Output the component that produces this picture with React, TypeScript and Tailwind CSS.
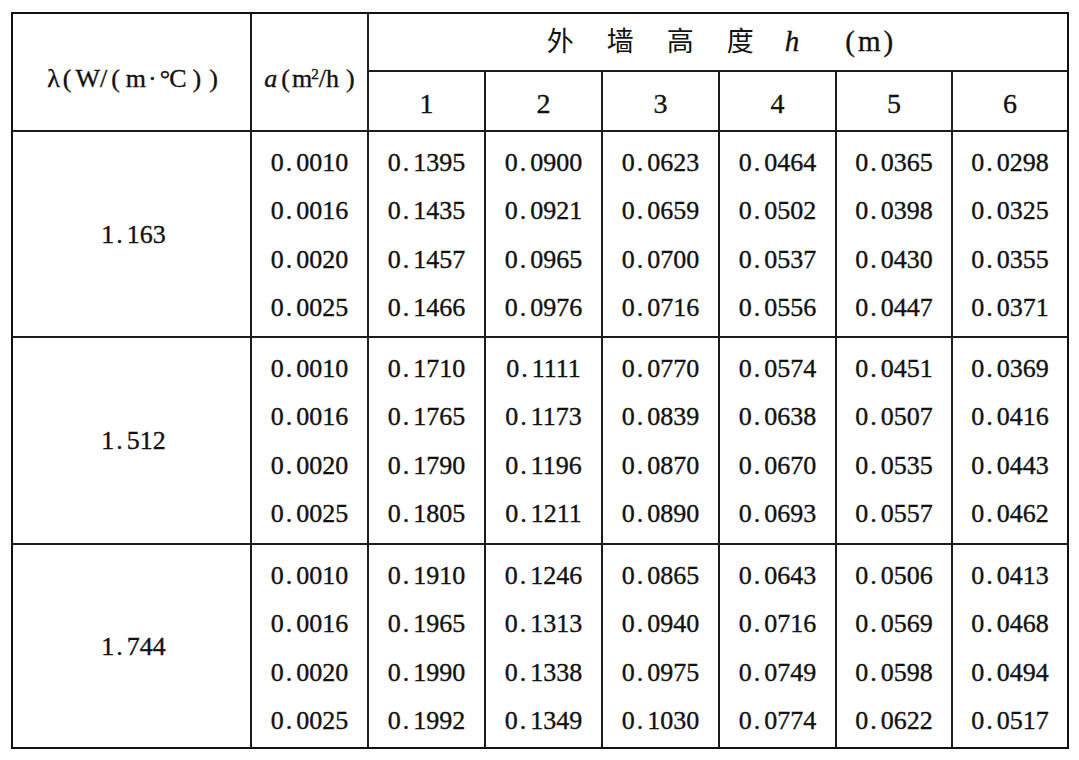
import React from 'react'

const groups = [
  {
    lambda: '1.163',
    rows: [
      ['0.0010', '0.1395', '0.0900', '0.0623', '0.0464', '0.0365', '0.0298'],
      ['0.0016', '0.1435', '0.0921', '0.0659', '0.0502', '0.0398', '0.0325'],
      ['0.0020', '0.1457', '0.0965', '0.0700', '0.0537', '0.0430', '0.0355'],
      ['0.0025', '0.1466', '0.0976', '0.0716', '0.0556', '0.0447', '0.0371'],
    ],
  },
  {
    lambda: '1.512',
    rows: [
      ['0.0010', '0.1710', '0.1111', '0.0770', '0.0574', '0.0451', '0.0369'],
      ['0.0016', '0.1765', '0.1173', '0.0839', '0.0638', '0.0507', '0.0416'],
      ['0.0020', '0.1790', '0.1196', '0.0870', '0.0670', '0.0535', '0.0443'],
      ['0.0025', '0.1805', '0.1211', '0.0890', '0.0693', '0.0557', '0.0462'],
    ],
  },
  {
    lambda: '1.744',
    rows: [
      ['0.0010', '0.1910', '0.1246', '0.0865', '0.0643', '0.0506', '0.0413'],
      ['0.0016', '0.1965', '0.1313', '0.0940', '0.0716', '0.0569', '0.0468'],
      ['0.0020', '0.1990', '0.1338', '0.0975', '0.0749', '0.0598', '0.0494'],
      ['0.0025', '0.1992', '0.1349', '0.1030', '0.0774', '0.0622', '0.0517'],
    ],
  },
]

// numbers are typeset with a loose decimal point, like the printed table
const Num: React.FC<{ v: string }> = ({ v }) => {
  const [i, f] = v.split('.')
  return (
    <span className="inline-flex">
      <span>{i}</span>
      <span className="ml-[2px] mr-[4px]">.</span>
      <span>{f}</span>
    </span>
  )
}

const Cjk: React.FC<{ ch: string; first?: boolean }> = ({ ch, first }) => (
  <span className={`font-['Noto_Sans_CJK_SC',sans-serif] text-[27px] leading-none [-webkit-text-stroke:0px] ${first ? '' : 'ml-[33px]'}`}>{ch}</span>
)

export default function App() {
  return (
    <div className="min-h-screen bg-white font-['Liberation_Serif',serif] text-[26px] text-[#111] [-webkit-text-stroke:0.35px_#111]">
      <div className="ml-[11px] pt-[12px]">
        <div className="grid w-fit grid-cols-[237px_115px_115px_115px_115px_115px_114px_114px] grid-rows-[56px_58px_204px_205px_202px] gap-[2px] border-2 border-[#111] bg-[#1c1c1c]">
          {/* header */}
          <div className="row-span-2 flex items-center justify-center bg-white pl-[2px] pt-[12px]">
            <span className="flex items-baseline">
              <span>λ</span>
              <span className="ml-[3px] mr-[4px]">(</span>
              <span>W/</span>
              <span className="ml-[4px] mr-[6px]">(</span>
              <span>m</span>
              <span className="ml-[2px] mr-[3px]">·</span>
              <span>°</span>
              <span className="-ml-[1px]">C</span>
              <span className="ml-[6px]">)</span>
              <span className="ml-[8px]">)</span>
            </span>
          </div>
          <div className="row-span-2 flex items-center justify-center bg-white pt-[12px]">
            <span className="flex items-baseline">
              <i>a</i>
              <span className="ml-[4px] mr-[2px]">(</span>
              <span>m</span>
              <sup className="-ml-[1px] text-[15px]">2</sup>
              <span>/h</span>
              <span className="ml-[7px]">)</span>
            </span>
          </div>
          <div className="col-span-6 flex items-center justify-center bg-white pl-[4px]">
            <span className="flex items-baseline text-[29px]">
              <Cjk ch="外" first />
              <Cjk ch="墙" />
              <Cjk ch="高" />
              <Cjk ch="度" />
              <i className="ml-[31px]">h</i>
              <span className="ml-[46px]">(</span>
              <span className="mx-[3px]">m</span>
              <span>)</span>
            </span>
          </div>
          {['1', '2', '3', '4', '5', '6'].map((d) => (
            <div key={d} className="flex items-center justify-center bg-white pt-[5px] text-[28px]">
              {d}
            </div>
          ))}

          {/* body */}
          {groups.map((g) => (
            <React.Fragment key={g.lambda}>
              <div className="flex items-center justify-center bg-white pl-[4px]">
                <Num v={g.lambda} />
              </div>
              {[0, 1, 2, 3, 4, 5, 6].map((c) => (
                <div key={c} className="flex flex-col bg-white pt-[6px]">
                  {g.rows.map((r, ri) => (
                    <div key={ri} className="flex h-[48.5px] items-center justify-center">
                      <Num v={r[c]} />
                    </div>
                  ))}
                </div>
              ))}
            </React.Fragment>
          ))}
        </div>
      </div>
    </div>
  )
}
